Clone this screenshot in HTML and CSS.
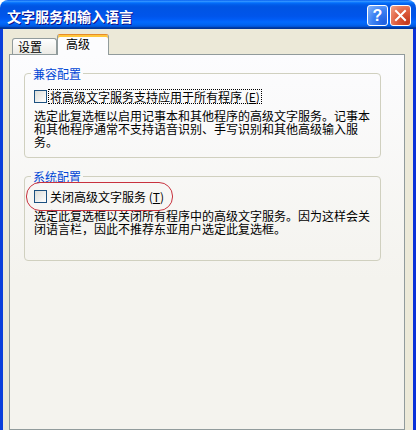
FILE: index.html
```html
<!DOCTYPE html>
<html lang="zh-CN">

<head>
  <meta charset="UTF-8">
  <title>文字服务和输入语言</title>
  <link rel="stylesheet" href="styles.css">
</head>

<body>

  <div class="window">
    <div class="titlebar">
      <div class="title">文字服务和输入语言</div>
      <div class="tbtn help">?</div>
      <div class="tbtn close">
        <svg width="19" height="19" viewBox="0 0 19 19">
          <path d="M5 5 L14 14 M14 5 L5 14" stroke="#fff" stroke-width="2" stroke-linecap="square" />
        </svg>
      </div>
    </div>

    <div class="frame">
      <div class="tabs">
        <div class="tab">设置</div>
        <div class="tab active">高级</div>
      </div>

      <div class="panel">
        <fieldset class="group">
          <legend>兼容配置</legend>
          <div class="row">
            <span class="check"></span>
            <span class="label focus">将高级文字服务支持应用于所有程序 (<u>E</u>)</span>
          </div>
          <p class="desc">选定此复选框以启用记事本和其他程序的高级文字服务。记事本<br>和其他程序通常不支持语音识别、手写识别和其他高级输入服<br>务。</p>
        </fieldset>

        <fieldset class="group system">
          <legend>系统配置</legend>
          <div class="row marked">
            <span class="check"></span>
            <span class="label">关闭高级文字服务 (<u>T</u>)</span>
          </div>
          <p class="desc">选定此复选框以关闭所有程序中的高级文字服务。因为这样会关<br>闭语言栏，因此不推荐东亚用户选定此复选框。</p>
        </fieldset>
      </div>
    </div>
  </div>

</body>

</html>
```

FILE: styles.css
```css
body {
  margin: 0;
  font-family: "Noto Sans CJK SC", "Liberation Sans", sans-serif;
  font-size: 12px;
  background-color: #fff;
}

.window {
  width: 416px;
  height: 430px;
  display: flex;
  flex-direction: column;
  overflow: hidden;
}

.titlebar {
  height: 29px;
  flex: none;
  display: flex;
  align-items: center;
  padding: 2px 5px 0 7px;
  box-sizing: border-box;
  border-radius: 8px 8px 0 0;
  background: linear-gradient(to bottom, #0058ee 0%, #3593ff 4%, #288eff 6%, #127dff 8%, #036ffc 10%, #0262ee 14%, #0057e5 20%, #0054e3 24%, #0055eb 56%, #005bf5 66%, #026afe 76%, #0062ef 86%, #0052d6 92%, #0040ab 94%, #003092 100%);
}

.title {
  flex: 1;
  color: #fff;
  font-size: 14px;
  font-weight: bold;
  text-shadow: 1px 1px #0f1089;
}

.tbtn {
  width: 21px;
  height: 21px;
  box-sizing: border-box;
  border: 1px solid #fff;
  border-radius: 3px;
  margin-left: 2px;
  display: flex;
  align-items: center;
  justify-content: center;
}

.help {
  color: #fff;
  font-family: "Liberation Sans", sans-serif;
  font-size: 16px;
  font-weight: bold;
  background: radial-gradient(circle at 85% 85%, #1f5fe0 0%, #3a80f3 50%, #8ab6fa 100%);
}

.close {
  background: radial-gradient(circle at 85% 85%, #c2381c 0%, #e05f3e 50%, #f3a58b 100%);
}

.frame {
  flex: 1;
  display: flex;
  flex-direction: column;
  background-color: #ece9d8;
  border-left: 3px solid #0b3fdb;
  border-right: 3px solid #0831d9;
  padding: 5px 8px 0 6px;
}

.tabs {
  display: flex;
  align-items: flex-end;
  height: 20px;
  padding-left: 3px;
  border-bottom: 1px solid #919b9c;
}

.tab {
  box-sizing: border-box;
  height: 16px;
  width: 45px;
  padding-left: 5px;
  line-height: 15px;
  border: 1px solid #919b9c;
  border-bottom: none;
  border-radius: 3px 3px 0 0;
  background: linear-gradient(#fefefe, #ecebe6);
}

.tab.active {
  height: 21px;
  width: 52px;
  padding-left: 8px;
  padding-top: 1px;
  line-height: 15px;
  margin-bottom: -1px;
  border-top: 1px solid #e68b2c;
  box-shadow: inset 0 2px #ffc73c;
  background: #fcfcfe;
}

.panel {
  flex: 1;
  border: 1px solid #919b9c;
  border-top: none;
  background: linear-gradient(#fcfcfe, #f4f3ee 60%);
  padding: 12px 23px 0 14px;
}

.group {
  margin: 0;
  min-width: 0;
  border: 1px solid #d0d0bf;
  border-radius: 4px;
  padding: 0 9px 9px 9px;
}

.group legend {
  color: #0046d5;
  padding: 0 2px;
  margin-left: -3px;
  line-height: 13px;
}

.row {
  display: flex;
  align-items: center;
  width: max-content;
  height: 13px;
  margin-top: 10px;
}

.check {
  width: 13px;
  height: 13px;
  box-sizing: border-box;
  border: 1px solid #1c5180;
  background: linear-gradient(135deg, #dcdcd7, #fff);
}

.label {
  margin-left: 2px;
  padding: 0 1px;
  line-height: 13px;
}

.focus {
  outline: 1px dotted #000;
}

.desc {
  margin: 6px 0 0;
  line-height: 13px;
}

.system {
  margin-top: 12px;
  padding-bottom: 25px;
}

.system .row {
  margin-top: 7px;
}

.marked {
  border-radius: 6px;
  outline: 1px solid #c8323e;
  outline-offset: 7px;
}
```
